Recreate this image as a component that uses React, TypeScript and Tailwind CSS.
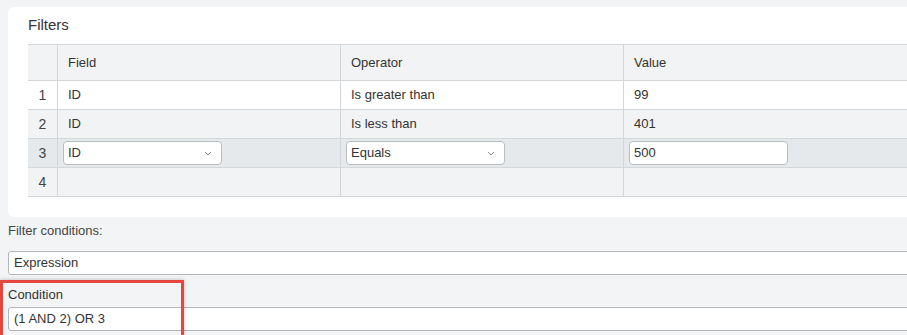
const rows = [
    { n: 1, field: 'ID', operator: 'Is greater than', value: '99', bg: 'bg-white' },
    { n: 2, field: 'ID', operator: 'Is less than', value: '401', bg: 'bg-[#f2f3f4]' },
]

function Chevron() {
    return (
        <svg width="8" height="5" viewBox="0 0 8 5" className="shrink-0">
            <path d="M1 1 L4 4 L7 1" fill="none" stroke="#8a8f93" strokeWidth="1" />
        </svg>
    )
}

function SelectBox({ text }: { text: string }) {
    return (
        <div className="flex h-[24px] w-[159px] items-center justify-between rounded-[4px] border border-[#b8bdc0] bg-white pl-[4px] pr-[9px]">
            <span>{text}</span>
            <Chevron />
        </div>
    )
}

export default function App() {
    return (
        <div className="relative h-[335px] w-[907px] overflow-hidden bg-[#f3f4f5] px-2 pt-[7px] font-['Liberation_Sans',Arial,sans-serif] text-[13px] text-[#333]">
            <div className="w-[930px] rounded-[6px] bg-white pb-[20px] pl-5 pt-2">
                <h2 className="mb-[9px] text-[15px] leading-5 text-[#333]">Filters</h2>
                <div className="grid grid-cols-[29px_283px_283px_1fr] border-b border-[#d3d7d9]">
                    {/* header */}
                    <div className="h-[36px] border-t border-[#d3d7d9] bg-[#f2f3f4]" />
                    <div className="flex h-[36px] items-center border-l border-t border-[#d3d7d9] bg-[#f2f3f4] pl-[10px]">Field</div>
                    <div className="flex h-[36px] items-center border-l border-t border-[#d3d7d9] bg-[#f2f3f4] pl-[10px]">Operator</div>
                    <div className="flex h-[36px] items-center border-l border-t border-[#d3d7d9] bg-[#f2f3f4] pl-[10px]">Value</div>

                    {rows.map((r) => (
                        <div key={r.n} className="contents">
                            <div className={`flex h-[29px] items-center justify-center border-t border-[#d3d7d9] text-[14px] text-[#444] ${r.bg}`}>{r.n}</div>
                            <div className={`flex h-[29px] items-center border-l border-t border-[#d3d7d9] pl-[10px] ${r.bg}`}>{r.field}</div>
                            <div className={`flex h-[29px] items-center border-l border-t border-[#d3d7d9] pl-[10px] ${r.bg}`}>{r.operator}</div>
                            <div className={`flex h-[29px] items-center border-l border-t border-[#d3d7d9] pl-[10px] ${r.bg}`}>{r.value}</div>
                        </div>
                    ))}

                    {/* editing row */}
                    <div className="flex h-[29px] items-center justify-center border-t border-[#d3d7d9] bg-[#e5e9eb] text-[14px] text-[#444]">3</div>
                    <div className="flex h-[29px] items-center border-l border-t border-[#d3d7d9] bg-[#e5e9eb] pl-[5px]">
                        <SelectBox text="ID" />
                    </div>
                    <div className="flex h-[29px] items-center border-l border-t border-[#d3d7d9] bg-[#e5e9eb] pl-[5px]">
                        <SelectBox text="Equals" />
                    </div>
                    <div className="flex h-[29px] items-center border-l border-t border-[#d3d7d9] bg-[#e5e9eb] pl-[5px]">
                        <div className="flex h-[24px] w-[159px] items-center rounded-[4px] border border-[#b8bdc0] bg-white pl-[4px]">500</div>
                    </div>

                    <div className="flex h-[29px] items-center justify-center border-t border-[#d3d7d9] bg-[#f2f3f4] text-[14px] text-[#444]">4</div>
                    <div className="h-[29px] border-l border-t border-[#d3d7d9] bg-[#f2f3f4]" />
                    <div className="h-[29px] border-l border-t border-[#d3d7d9] bg-[#f2f3f4]" />
                    <div className="h-[29px] border-l border-t border-[#d3d7d9] bg-[#f2f3f4]" />
                </div>
            </div>

            <div className="mt-[6px] leading-4 text-[#444]">Filter conditions:</div>
            <div className="mt-3 flex h-[24px] w-[910px] items-center rounded-[3px] border border-[#b3b7ba] bg-white pl-[5px]">Expression</div>

            <div className="mt-[12px] leading-4 text-[#333]">Condition</div>
            <div className="mt-[4px] flex h-[24px] w-[910px] items-center rounded-[3px] border border-[#b3b7ba] bg-white pl-[5px]">(1 AND 2) OR 3</div>

            <div className="absolute left-0 top-[280px] h-[70px] w-[184px] border-[3px] border-[#e5473f] shadow-[0_0_4px_rgba(0,0,0,0.25)]" />
        </div>
    )
}
